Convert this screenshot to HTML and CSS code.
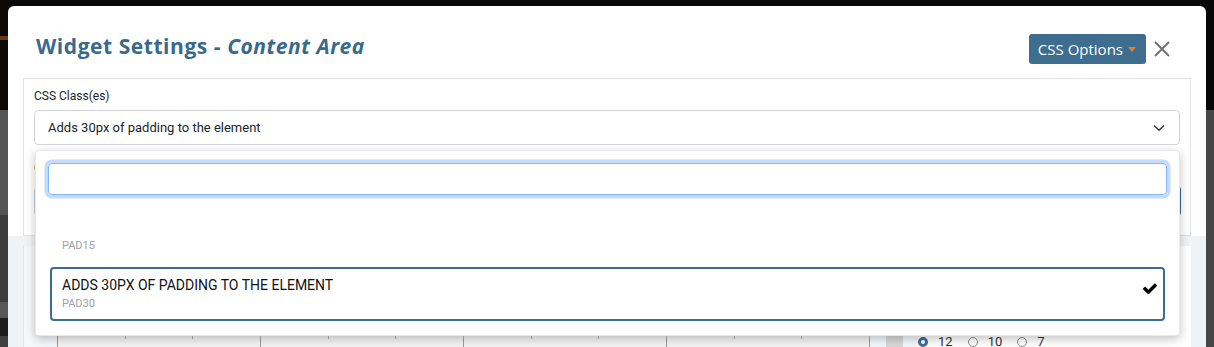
FILE: index.html
```html
<!DOCTYPE html>
<html lang="en">
<head>
<meta charset="utf-8">
<title>Widget Settings</title>
<link rel="stylesheet" href="styles.css">
</head>
<body>
<div class="bd-left"></div>
<div class="modal">
  <div class="modal-header">
    <h2 class="title">Widget Settings - <em>Content Area</em></h2>
    <div class="header-actions">
      <button class="btn-css">CSS Options<span class="caret"></span></button>
      <button class="btn-close" aria-label="Close">
        <svg width="16" height="16" viewBox="0 0 16 16"><path d="M1 1L15 15M15 1L1 15" stroke="#6f6f6f" stroke-width="1.8" fill="none"/></svg>
      </button>
    </div>
  </div>
  <div class="modal-body">
    <div class="panel">
      <div class="field">
        <label class="label">CSS Class(es)</label>
        <div class="select-wrap">
          <div class="select">
            <span class="select-text">Adds 30px of padding to the element</span>
            <svg class="chev" width="12" height="8" viewBox="0 0 12 8"><path d="M1 1.5L6 6.2L11 1.5" stroke="#343a40" stroke-width="1.5" fill="none"/></svg>
          </div>
          <div class="dropdown">
            <div class="search"></div>
            <div class="options">
              <div class="option">
                <div class="opt-text">
                  <div class="opt-title"></div>
                  <div class="opt-sub">PAD15</div>
                </div>
              </div>
              <div class="option selected">
                <div class="opt-text">
                  <div class="opt-title">Adds 30px of padding to the element</div>
                  <div class="opt-sub">PAD30</div>
                </div>
                <svg class="check" width="14" height="11" viewBox="121 338 1550 1090"><path d="M1671 566q0 40-28 68l-724 724-136 136q-28 28-68 28t-68-28l-136-136-362-362q-28-28-28-68t28-68l136-136q28-28 68-28t68 28l294 295 656-657q28-28 68-28t68 28l136 136q28 28 28 68z" fill="#000"/></svg>
              </div>
            </div>
          </div>
        </div>
      </div>
      <div class="field field2">
        <label class="label">CSS ID</label>
        <div class="input-group">
          <div class="input"></div>
          <div class="input-btn"></div>
        </div>
      </div>
    </div>
    <div class="lower">
      <div class="lower-card">
        <div class="grid">
          <div class="grid-row minor">
            <span></span><span></span><span></span><span></span><span></span><span></span>
            <span></span><span></span><span></span><span></span><span></span><span></span>
          </div>
          <div class="grid-row major">
            <span></span><span></span><span></span><span></span>
          </div>
        </div>
        <div class="side-box"></div>
        <div class="radios">
          <span class="radio on"></span><span class="radio-label">12</span>
          <span class="radio"></span><span class="radio-label">10</span>
          <span class="radio"></span><span class="radio-label">7</span>
        </div>
      </div>
    </div>
  </div>
</div>
<div class="bd-right"></div>
</body>
</html>
```

FILE: styles.css
```css
html, body {
  margin: 0;
  padding: 0;
}
body {
  width: 1214px;
  height: 347px;
  overflow: hidden;
  display: flex;
  font-family: Roboto, "Liberation Sans", sans-serif;
  background: #0a0a0a;
}
.bd-left {
  width: 8px;
  flex: none;
  background: linear-gradient(#0c0a08 0 36px, #6a3a12 36px 40px, #0c0a08 40px 110px, #555 110px 215px, #3c3c3c 215px 302px, #575757 302px 318px, #1d1d1d 318px 336px, #3f3f3f 336px);
}
.bd-right {
  width: 8px;
  flex: none;
  background: linear-gradient(#080808 0 110px, #464646 110px);
}
.modal {
  flex: 1;
  min-width: 0;
  margin-top: 6px;
  background: #fff;
  border-radius: 6px 6px 0 0;
  display: flex;
  flex-direction: column;
  overflow: hidden;
}
.modal-header {
  flex: none;
  height: 72px;
  box-sizing: border-box;
  padding: 27px 36px 0 28px;
  display: flex;
  justify-content: space-between;
  align-items: flex-start;
}
.title {
  margin: 0;
  font-family: "Open Sans", sans-serif;
  font-weight: 700;
  font-size: 21px;
  letter-spacing: 0.55px;
  line-height: 27px;
  color: #386a8d;
}
.title em {
  font-style: italic;
}
.header-actions {
  margin-top: 1px;
  display: flex;
  align-items: center;
  gap: 8px;
}
.btn-css {
  height: 30px;
  box-sizing: border-box;
  border: none;
  border-radius: 3px;
  background: #3d6e8f;
  color: #fff;
  font-family: "Open Sans", sans-serif;
  font-size: 15px;
  padding: 0 10px 0 9px;
  display: flex;
  align-items: center;
}
.caret {
  margin-left: 5px;
  width: 0;
  height: 0;
  border-left: 4px solid transparent;
  border-right: 4px solid transparent;
  border-top: 5px solid #f07b26;
}
.btn-close {
  border: none;
  background: none;
  padding: 0;
  width: 16px;
  height: 16px;
  display: flex;
}
.modal-body {
  flex: none;
  display: flex;
  flex-direction: column;
}
.panel {
  flex: none;
  margin: 0 15px;
  border: 1px solid #dfe2e6;
  padding: 10px 10px 19px;
  background: #fff;
}
.label {
  display: block;
  font-size: 12px;
  line-height: 14px;
  color: #212529;
  margin-bottom: 7px;
}
.select-wrap {
  position: relative;
}
.select {
  height: 35px;
  box-sizing: border-box;
  border: 1px solid #cfd3d8;
  border-radius: 4px;
  padding: 0 13px;
  display: flex;
  align-items: center;
  justify-content: space-between;
  font-size: 13px;
  line-height: 15px;
  color: #212529;
}
.chev {
  margin-right: 1px;
}
.dropdown {
  position: absolute;
  top: calc(100% + 5px);
  left: 1px;
  right: 0;
  z-index: 5;
  background: #fff;
  border: 1px solid #e9e9e9;
  border-radius: 4px;
  box-shadow: 0 3px 10px rgba(0, 0, 0, 0.24);
  padding: 12px 12px 14px;
}
.search {
  height: 32px;
  box-sizing: border-box;
  border: 1px solid #86b7fe;
  border-radius: 4px;
  box-shadow: 0 0 0 3.5px #c4dbfd;
}
.options {
  margin-top: 14px;
  padding: 0 2px;
  display: flex;
  flex-direction: column;
  gap: 4px;
}
.option {
  border: 2px solid transparent;
  border-radius: 4px;
  padding: 8px 6px 9px 10px;
  display: flex;
  align-items: flex-start;
}
.option.selected {
  border-color: #3b6d8e;
}
.opt-text {
  flex: 1;
}
.opt-title {
  height: 16px;
  font-size: 14px;
  line-height: 16px;
  color: #111;
  text-transform: uppercase;
}
.opt-sub {
  margin-top: 4px;
  font-size: 11px;
  line-height: 13px;
  color: #9aa1a8;
}
.check {
  margin-top: 6px;
}
.field2 {
  margin-top: 16px;
}
.field2 .label {
  margin-bottom: 11px;
}
.input-group {
  display: flex;
  height: 30px;
  margin-right: -1px;
}
.input {
  flex: 1;
  border: 1px solid #ced4da;
  border-radius: 4px 0 0 4px;
}
.input-btn {
  width: 40px;
  background: #3d6e8f;
  border-radius: 0 4px 4px 0;
}
.lower {
  flex: none;
  background: #f1f2f4;
  padding: 10px 15px 0;
}
.lower-card {
  height: 200px;
  background: #f6f7f8;
  border-left: 1px solid #e3e5e8;
  display: flex;
  align-items: flex-start;
  padding-left: 33px;
}
.grid {
  width: 812px;
  margin-top: 43px;
  border-left: 1px solid #9d9d9d;
  background: #f4f4f4;
}
.grid-row {
  display: flex;
}
.grid-row span {
  flex: 1;
  border-right: 1px solid #b3b3b3;
}
.grid-row.minor span {
  height: 50px;
}
.grid-row.major span {
  height: 20px;
  border-right-color: #9d9d9d;
}
.side-box {
  width: 17px;
  height: 80px;
  margin-left: 16px;
  margin-top: 60px;
  background: #d8d8d8;
}
.radios {
  margin-left: 15px;
  padding: 88px 20px 0 0;
  display: flex;
  align-items: flex-start;
  font-size: 13px;
  line-height: 15px;
  color: #333;
  background: #fff;
  flex: 1;
  height: 120px;
  box-sizing: border-box;
}
.radio {
  width: 10px;
  height: 10px;
  margin-top: 3px;
  box-sizing: border-box;
  border-radius: 50%;
  border: 1px solid #8a8a8a;
  background: #fff;
  margin-right: 10px;
}
.radio.on {
  border: 3px solid #3d6e8f;
}
.radio-label {
  margin-right: 15px;
}
```
